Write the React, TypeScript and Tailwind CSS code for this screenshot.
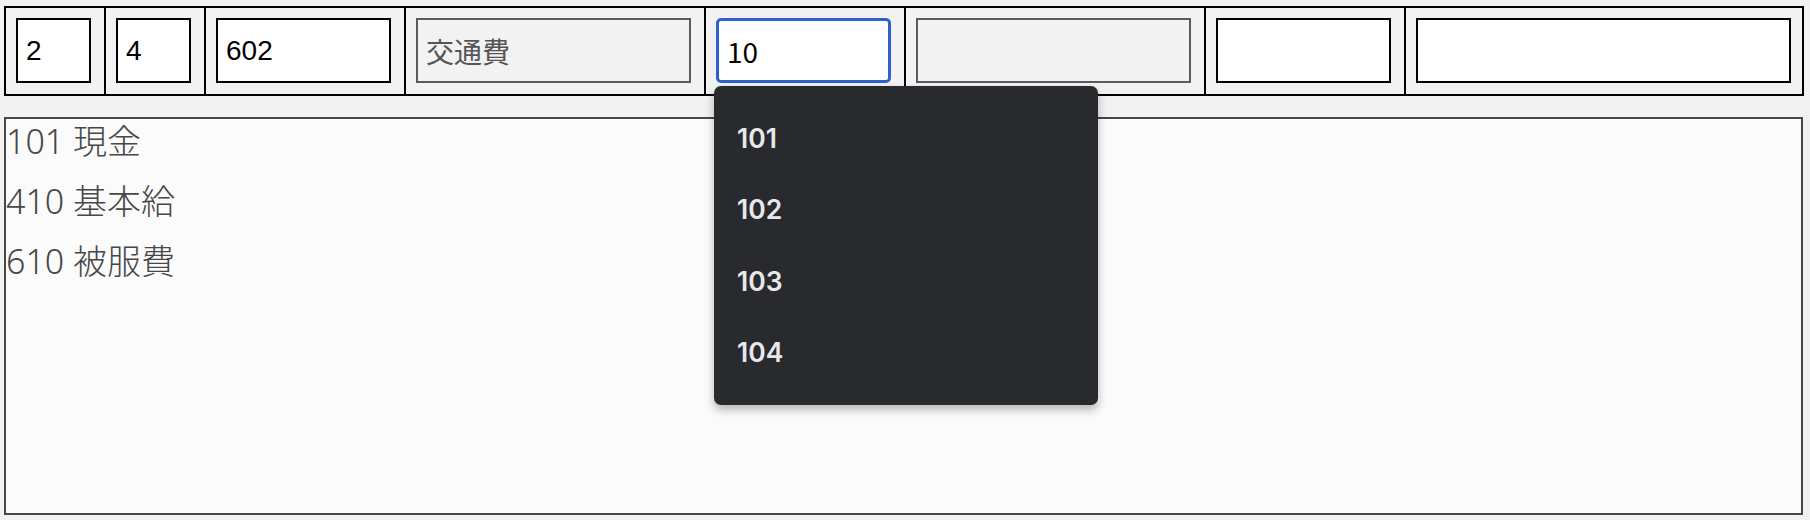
const inputFont = { fontFamily: '"Liberation Sans", "Noto Sans CJK JP", sans-serif' };

type Cell = {
  cellClass: string;
  inputClass: string;
  value: string;
  readOnly?: boolean;
  focused?: boolean;
};

const CELLS: Cell[] = [
  { cellClass: 'w-[100px] border-r-2', inputClass: 'w-[75px]', value: '2' },
  { cellClass: 'w-[100px] border-r-2', inputClass: 'w-[75px]', value: '4' },
  { cellClass: 'w-[200px] border-r-2', inputClass: 'w-[175px]', value: '602' },
  { cellClass: 'w-[300px] border-r-2', inputClass: 'w-[275px]', value: '交通費', readOnly: true },
  { cellClass: 'w-[200px] border-r-2', inputClass: 'w-[175px]', value: '10', focused: true },
  { cellClass: 'w-[300px] border-r-2', inputClass: 'w-[275px]', value: '', readOnly: true },
  { cellClass: 'w-[200px] border-r-2', inputClass: 'w-[175px]', value: '' },
  { cellClass: 'flex-1', inputClass: 'w-[375px]', value: '' },
];

const SUGGESTIONS = ['101', '102', '103', '104'];

const ACCOUNTS = ['101 現金', '410 基本給', '610 被服費'];

function Suggestions() {
  return (
    <ul
      className="absolute left-[8px] top-[78px] z-10 w-[384px] rounded-[7px] bg-[#292a2e] pt-[17px] pb-[16px] shadow-[0_5px_10px_rgba(0,0,0,0.28)]"
      style={{ fontFamily: 'Inter, "Noto Sans", sans-serif' }}
    >
      {SUGGESTIONS.map((s) => (
        <li key={s} className="flex h-[71.5px] items-center pl-[23px] text-[26.5px] font-semibold text-[#e8e8ea]">
          {s}
        </li>
      ))}
    </ul>
  );
}

function EntryCell({ cell }: { cell: Cell }) {
  let inputStyle = 'border-2 border-black bg-white text-black';
  if (cell.readOnly) inputStyle = 'border-2 border-[#5b5b5b] bg-[#f2f2f2] text-[#555]';
  if (cell.focused) inputStyle = 'border-[3px] border-[#2b62cc] rounded-[5px] bg-white text-black';

  return (
    <div className={`relative h-full border-black pl-[10px] pt-[10px] ${cell.cellClass}`}>
      <input
        className={`h-[65px] px-[8px] text-[28px] outline-none ${cell.inputClass} ${inputStyle}`}
        style={cell.focused ? { fontFamily: '"Noto Sans CJK JP", sans-serif' } : inputFont}
        value={cell.value}
        readOnly
      />
      {cell.focused && <Suggestions />}
    </div>
  );
}

export default function App() {
  return (
    <div className="min-h-[520px] bg-[#f2f2f2] pl-[4px] pt-[6px]">
      <div className="flex h-[90px] w-[1800px] border-2 border-black">
        {CELLS.map((c, i) => (
          <EntryCell key={i} cell={c} />
        ))}
      </div>

      <div
        className="mt-[21px] flex h-[398px] w-[1799px] flex-col gap-[15px] border-2 border-[#474747] bg-[#fbfbfb] text-[34px] font-light leading-[45px] text-[#474747]"
        style={{ fontFamily: '"Noto Sans", "Noto Sans CJK JP", sans-serif' }}
      >
        {ACCOUNTS.map((a) => (
          <div key={a}>{a}</div>
        ))}
      </div>
    </div>
  );
}
